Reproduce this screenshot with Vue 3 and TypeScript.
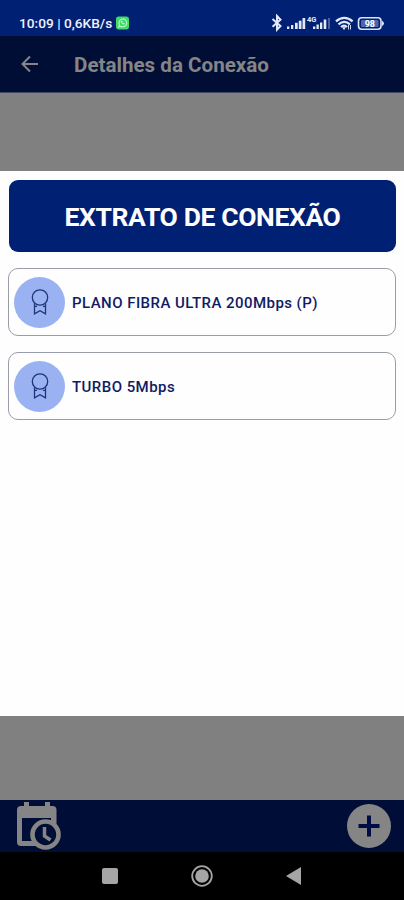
<script setup lang="ts">
interface Plan {
  id: number
  name: string
}

const plans: Plan[] = [
  { id: 1, name: 'PLANO FIBRA ULTRA 200Mbps (P)' },
  { id: 2, name: 'TURBO 5Mbps' },
]
</script>

<template>
  <div class="screen">
    <div class="status">
      <span class="clock">10:09 | 0,6KB/s</span>
      <svg class="chat" width="13" height="14" viewBox="0 0 14 14">
        <rect width="14" height="14" rx="3" fill="#3fdc68" />
        <path d="M3 11.2l.7-2.3A4.2 4.2 0 1 1 5.2 10.500z" fill="none" stroke="#c5fbd3" stroke-width="1.1" />
        <path d="M5.400 4.900c0 2.100 1.600 3.600 3.600 3.800l.5-1-1.200-.6-.5.5c-.6-.3-1-.7-1.200-1.200l.5-.5-.6-1.200z" fill="#e8fff0" />
      </svg>
      <svg class="system" width="114" height="18" viewBox="0 0 114 18">
        <path d="M1.500 5L9.500 12 6 15.600V2L9.500 5.700 1.500 12.700" fill="none" stroke="#e4e9fa" stroke-width="2" />
        <g fill="#e4e9fa">
          <rect x="16" y="12.500" width="2.300" height="2.500" />
          <rect x="20" y="11" width="2.300" height="4" />
          <rect x="24" y="8.800" width="2.700" height="6.200" />
          <rect x="27.800" y="6.700" width="2.700" height="8.300" />
          <rect x="31.500" y="4" width="2.700" height="11" />
          <rect x="42" y="12.500" width="2.300" height="2.500" />
          <rect x="45.500" y="10.500" width="2.300" height="4.500" />
          <rect x="49" y="8.500" width="2.300" height="6.500" />
          <rect x="52.700" y="5.500" width="2.600" height="9.500" />
          <rect x="57" y="4" width="2" height="11" opacity=".32" />
          <text x="36" y="8.300" font-size="7.500" font-weight="700">4G</text>
        </g>
        <g fill="none" stroke="#e4e9fa" stroke-width="2.300">
          <path d="M65 7.300Q73.300 .4 81.600 7.300" />
          <path d="M67.500 10.300Q73.300 5.400 79 10.300" />
          <path d="M70 13Q73 10.300 76 13" />
        </g>
        <path d="M71 13.200h4L73 16z" fill="#e4e9fa" />
        <path d="M77.500 11v4.500M79.500 11v4.500" stroke="#cbd4f1" stroke-width="1" />
        <rect x="87.500" y="3.800" width="22.500" height="11.400" rx="3.200" fill="none" stroke="#dce3f8" stroke-width="1.600" />
        <rect x="90" y="6" width="17.500" height="7" rx="1" fill="#4b66ae" />
        <path d="M111 6.800q4 2.700 0 5.400z" fill="#dce3f8" />
        <text x="93.700" y="12.800" font-size="9" font-weight="700" fill="#fff">98</text>
      </svg>
    </div>

    <header class="header">
      <svg class="back" width="18" height="18" viewBox="0 0 18 18">
        <path d="M17 9H2M9 1.500L1.500 9 9 16.500" fill="none" stroke="#858586" stroke-width="2" />
      </svg>
      <h1>Detalhes da Conexão</h1>
    </header>

    <main class="content">
      <section class="panel">
        <button class="statement" type="button"><span>EXTRATO DE CONEXÃO</span></button>
        <div v-for="plan in plans" :key="plan.id" class="plan">
          <div class="badge">
            <svg width="18" height="26" viewBox="0 0 18 26">
              <g fill="none" stroke="#203477" stroke-width="1.300">
                <circle cx="9" cy="8.500" r="7.700" />
                <path d="M3.500 14.500V17.300H6M3.500 17.300v7.500L9 21.800l5.500 3V17.300H12M14.500 17.300V14.500" />
              </g>
            </svg>
          </div>
          <span class="plan-name">{{ plan.name }}</span>
        </div>
      </section>
    </main>

    <footer class="actions">
      <svg width="46" height="49" viewBox="0 0 46 49">
        <path d="M8 0h5v4h16V0h5v4h2.500q4 0 4 4v23H1V8q0-4 4-4h3z" fill="#858585" />
        <path d="M1 30h20v14H5q-4 0-4-4z" fill="#858585" />
        <path d="M6 16h29v23H6z" fill="#000d36" />
        <circle cx="29.500" cy="32.500" r="13" fill="#000d36" stroke="#858585" stroke-width="4.600" />
        <path d="M28.500 25v9l6 4" fill="none" stroke="#858585" stroke-width="3.500" />
      </svg>
      <svg class="add" width="44" height="44" viewBox="0 0 44 44">
        <circle cx="22" cy="22" r="22" fill="#858585" />
        <path d="M22 11.500v21M11.500 22h21" stroke="#000d45" stroke-width="4" />
      </svg>
    </footer>

    <nav class="system-nav">
      <svg width="16" height="16" viewBox="0 0 16 16"><rect width="16" height="16" rx="2" fill="#a5a5a5" /></svg>
      <svg width="22" height="22" viewBox="0 0 22 22">
        <circle cx="11" cy="11" r="9.800" fill="none" stroke="#a5a5a5" stroke-width="1.800" />
        <circle cx="11" cy="11" r="6.800" fill="#a5a5a5" />
      </svg>
      <svg width="16" height="18" viewBox="0 0 16 18"><path d="M15 0v18L0 9z" fill="#a5a5a5" /></svg>
    </nav>
  </div>
</template>

<style>
body {
  margin: 0;
}
</style>

<style scoped>
.screen {
  display: flex;
  flex-direction: column;
  width: 404px;
  height: 900px;
  overflow: hidden;
  background: #808080;
  font-family: Roboto, "Liberation Sans", sans-serif;
}
svg {
  display: block;
  flex: none;
}
.status {
  display: flex;
  flex: none;
  box-sizing: border-box;
  height: 36px;
  padding: 10px 19px 0 19px;
  background: #002074;
  color: #eef1fb;
}
.clock {
  width: 97px;
  padding-top: 5px;
  font-size: 13.7px;
  font-weight: 500;
  line-height: 17px;
  white-space: nowrap;
}
.chat {
  margin-top: 6px;
}
.system {
  margin: 4px 0 0 auto;
}
.header {
  display: flex;
  flex: none;
  align-items: center;
  box-sizing: border-box;
  height: 57px;
  padding-left: 21px;
  border-bottom: 1px solid #424a61;
  background: #000e35;
}
h1 {
  margin: 2px 0 0 35px;
  color: #858586;
  font-size: 20.6px;
  font-weight: 700;
  line-height: 26px;
  white-space: nowrap;
}
.content {
  flex: none;
  height: 707px;
  box-sizing: border-box;
  padding-top: 78px;
}
.panel {
  display: flex;
  flex-direction: column;
  box-sizing: border-box;
  height: 544.5px;
  padding: 9px 8px 0;
  background: #fefefe;
}
.statement {
  display: flex;
  align-items: center;
  justify-content: center;
  height: 72px;
  margin: 0 0 16px 1px;
  padding: 2px 0 0;
  border: 0;
  border-radius: 9px;
  background: #002074;
  color: #fff;
  font-family: inherit;
  font-size: 26.5px;
  font-weight: 700;
  letter-spacing: -0.38px;
  line-height: 32px;
  white-space: nowrap;
}
.plan {
  display: flex;
  align-items: center;
  box-sizing: border-box;
  height: 68px;
  margin-bottom: 16px;
  padding-left: 5px;
  border: 1px solid #999da9;
  border-radius: 10px;
}
.badge {
  display: flex;
  align-items: center;
  justify-content: center;
  flex: none;
  width: 51px;
  height: 51px;
  border-radius: 50%;
  background: #9bb2f2;
}
.plan-name {
  margin: 1px 0 0 7px;
  color: #101b64;
  font-size: 15px;
  font-weight: 500;
  letter-spacing: 0.45px;
  white-space: nowrap;
}
.actions {
  display: flex;
  flex: none;
  align-items: flex-start;
  justify-content: space-between;
  box-sizing: border-box;
  height: 52px;
  padding: 2px 13px 0 16px;
  background: #000d36;
}
.add {
  margin-top: 2px;
}
.system-nav {
  display: flex;
  align-items: center;
  height: 48px;
  padding-left: 102px;
  gap: 73px;
  background: #000;
}
</style>
